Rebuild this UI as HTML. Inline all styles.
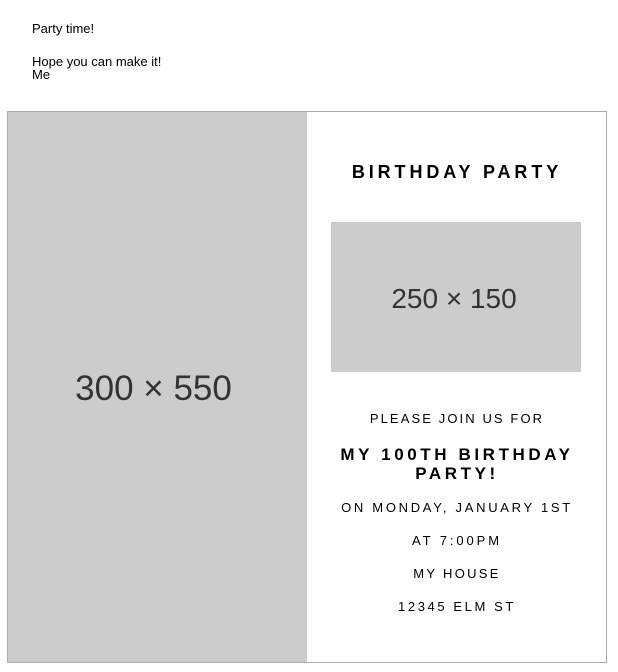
<!DOCTYPE html>
<html><head><style>
body{margin:0;width:618px;height:672px;position:relative;background:#fff;font-family:"Liberation Sans",Arial,sans-serif;overflow:hidden}
.t{position:absolute;left:32px;font-size:13px;color:#000;line-height:13px}
.box{position:absolute;left:7px;top:111px;width:598px;height:550px;border:1px solid #aaa}
.gl{position:absolute;left:4px;top:114px;width:299px;height:550px;display:flex;align-items:center;justify-content:center;font-size:35px;color:#333}
.glbg{position:absolute;left:8px;top:112px;width:299px;height:550px;background:#ccc}
.gs{position:absolute;left:329px;top:224px;width:250px;height:150px;display:flex;align-items:center;justify-content:center;font-size:28px;color:#333}
.gsbg{position:absolute;left:331px;top:222px;width:250px;height:150px;background:#ccc}
.c{position:absolute;left:307px;width:300px;text-align:center;color:#000}
.s{font-size:13px;letter-spacing:2.1px;line-height:16px}
.b{font-weight:bold;font-size:18px;letter-spacing:3.6px;line-height:19px}
</style></head><body>
<div class="t" style="top:22px">Party time!</div>
<div class="t" style="top:55px">Hope you can make it!<br>Me</div>
<div class="box"></div>
<div class="glbg"></div>
<div class="gl">300 × 550</div>
<div class="c b" style="top:163px;letter-spacing:3.9px">BIRTHDAY PARTY</div>
<div class="gsbg"></div>
<div class="gs">250 × 150</div>
<div class="c s" style="top:411px">PLEASE JOIN US FOR</div>
<div class="c b" style="top:445px;font-size:17px;padding:0 28px;box-sizing:border-box">MY 100TH BIRTHDAY PARTY!</div>
<div class="c s" style="top:500px;letter-spacing:2.7px">ON MONDAY, JANUARY 1ST</div>
<div class="c s" style="top:533px;letter-spacing:2.9px">AT 7:00PM</div>
<div class="c s" style="top:566px;letter-spacing:2.3px">MY HOUSE</div>
<div class="c s" style="top:599px;letter-spacing:2.6px">12345 ELM ST</div>
</body></html>
